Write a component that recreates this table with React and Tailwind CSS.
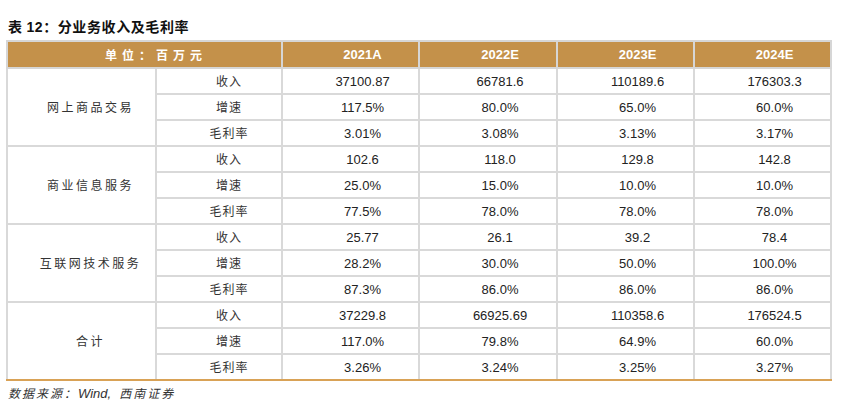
const groups = [
  {
    name: '网上商品交易',
    rows: [
      ['收入', '37100.87', '66781.6', '110189.6', '176303.3'],
      ['增速', '117.5%', '80.0%', '65.0%', '60.0%'],
      ['毛利率', '3.01%', '3.08%', '3.13%', '3.17%'],
    ],
  },
  {
    name: '商业信息服务',
    rows: [
      ['收入', '102.6', '118.0', '129.8', '142.8'],
      ['增速', '25.0%', '15.0%', '10.0%', '10.0%'],
      ['毛利率', '77.5%', '78.0%', '78.0%', '78.0%'],
    ],
  },
  {
    name: '互联网技术服务',
    rows: [
      ['收入', '25.77', '26.1', '39.2', '78.4'],
      ['增速', '28.2%', '30.0%', '50.0%', '100.0%'],
      ['毛利率', '87.3%', '86.0%', '86.0%', '86.0%'],
    ],
  },
  {
    name: '合计',
    rows: [
      ['收入', '37229.8', '66925.69', '110358.6', '176524.5'],
      ['增速', '117.0%', '79.8%', '64.9%', '60.0%'],
      ['毛利率', '3.26%', '3.24%', '3.25%', '3.27%'],
    ],
  },
];

const years = ['2021A', '2022E', '2023E', '2024E'];

const cjk = "font-['Noto_Sans_CJK_SC',sans-serif]";
const num = "font-['Liberation_Sans',Arial,sans-serif]";

export default function App() {
  return (
    <div className="w-[848px] h-[405px] bg-white pl-[6px] text-[#222]">
      <div className={`h-[40px] pt-[18px] pl-[2px] text-[14px] leading-[16px] font-bold tracking-[0.6px] text-[#111] ${cjk}`}>
        表 <span className={num}>12</span>：分业务收入及毛利率
      </div>
      <table className="table-fixed border-collapse w-[824px]">
        <colgroup>
          <col className="w-[149px]" />
          <col className="w-[126px]" />
          <col className="w-[137px]" />
          <col className="w-[138px]" />
          <col className="w-[137px]" />
          <col className="w-[137px]" />
        </colgroup>
        <thead>
          <tr className="h-[27px] bg-[#C4914A] text-white">
            <th colSpan={2} className={`border-2 border-[#d6d6d6] pl-[23px] text-[12px] font-bold tracking-[5px] ${cjk}`}>
              单位：百万元
            </th>
            {years.map((y) => (
              <th key={y} className={`border-2 border-[#d6d6d6] pl-[24px] text-[13px] font-bold ${num}`}>
                {y}
              </th>
            ))}
          </tr>
        </thead>
        <tbody>
          {groups.map((g, gi) =>
            g.rows.map((r, ri) => {
              const last = gi === groups.length - 1 && ri === 2;
              const cell = `border-2 border-[#d9d9d9] ${last ? 'border-b-[#D9A256]' : ''}`;
              return (
                <tr key={g.name + ri} className="h-[26px]">
                  {ri === 0 && (
                    <td
                      rowSpan={3}
                      className={`border-2 border-[#d9d9d9] ${gi === groups.length - 1 ? 'border-b-[#D9A256]' : ''} pl-[18px] text-center text-[12px] tracking-[2.5px] text-[#333] ${cjk}`}
                    >
                      {g.name}
                    </td>
                  )}
                  <td className={`${cell} pl-[20px] text-center text-[12px] tracking-[1px] text-[#333] ${cjk}`}>
                    {r[0]}
                  </td>
                  {r.slice(1).map((v, i) => (
                    <td key={i} className={`${cell} pl-[24px] text-center text-[13px] leading-[15px] ${num}`}>
                      {v}
                    </td>
                  ))}
                </tr>
              );
            })
          )}
        </tbody>
      </table>
      <div className={`pt-[5px] pl-[2px] text-[12px] leading-[14px] italic text-[#333] tracking-[2px] ${cjk}`}>
        数据来源：<span className={`${num} tracking-normal text-[13px]`}>Wind,</span>
        <span className="ml-[8px]">西南证券</span>
      </div>
    </div>
  );
}
